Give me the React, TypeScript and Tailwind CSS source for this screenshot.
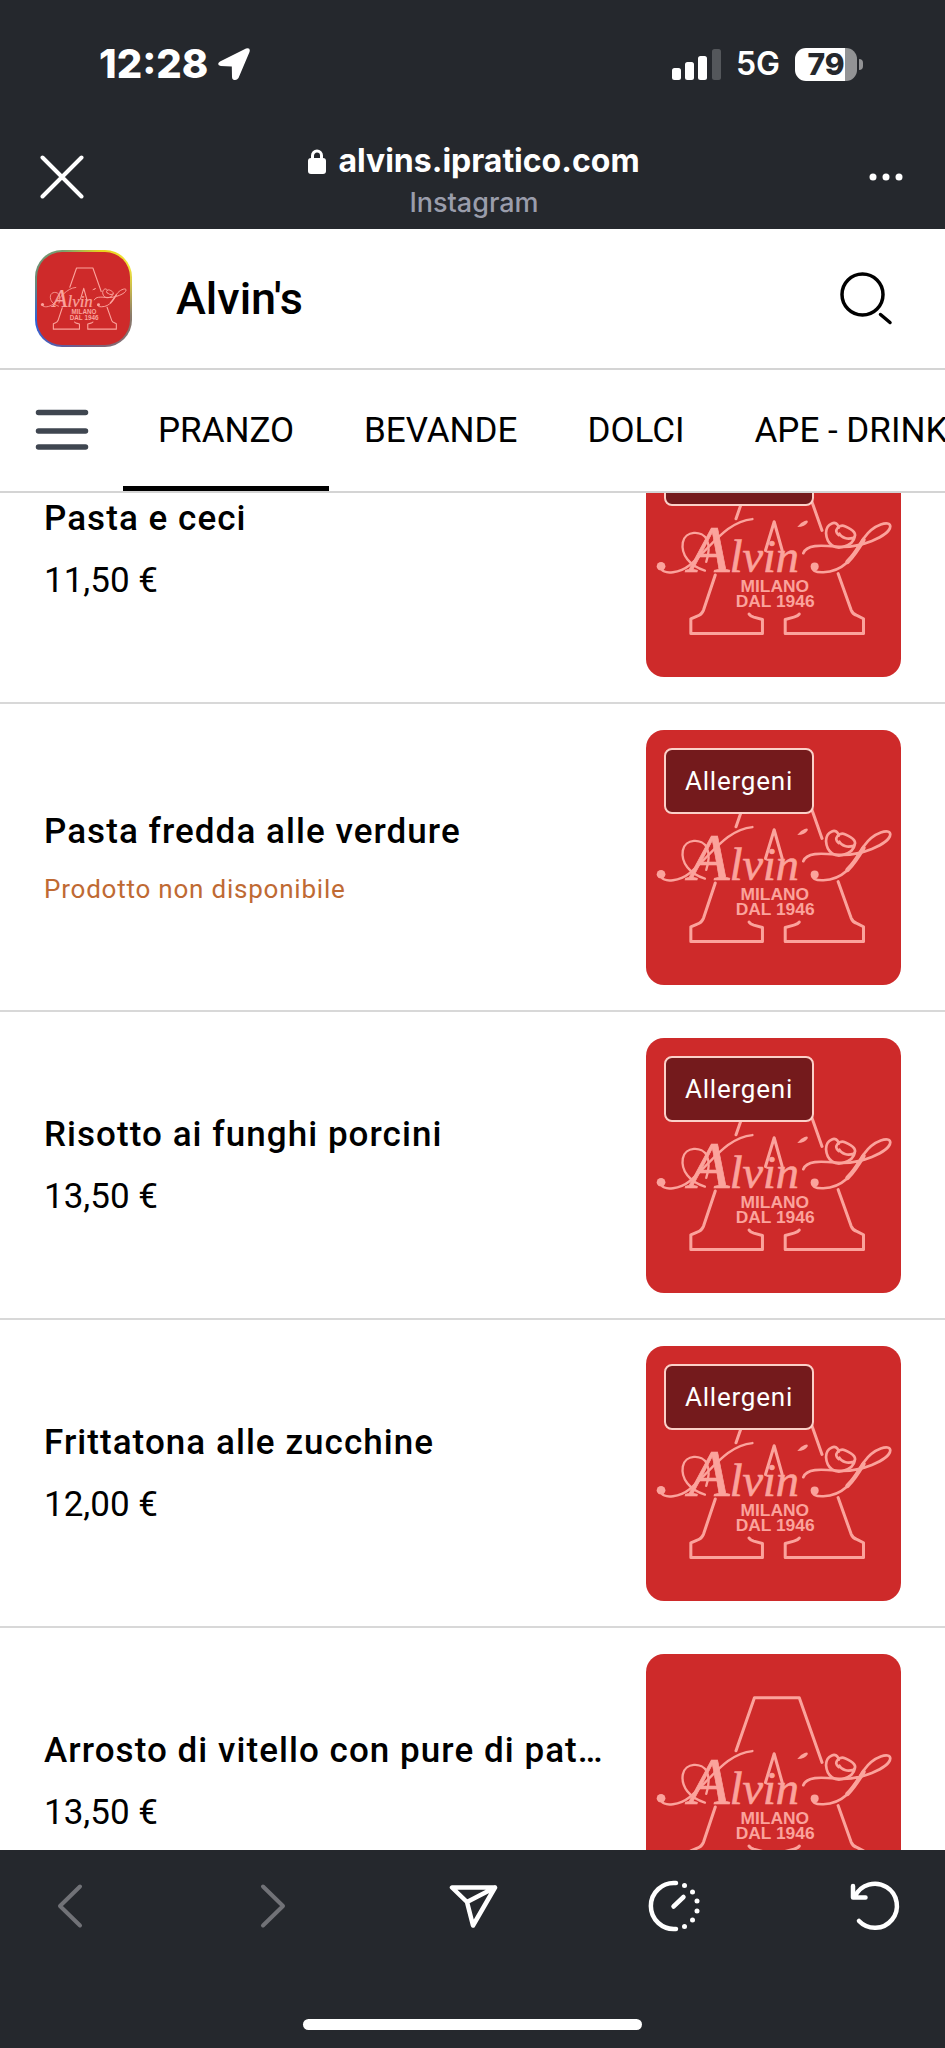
import { useState } from 'react';

interface MenuItem {
  id: number;
  name: string;
  price?: string;
  available: boolean;
  allergens: boolean;
}

const categories = ['PRANZO', 'BEVANDE', 'DOLCI', 'APE - DRINKS'];

const items: MenuItem[] = [
  { id: 1, name: 'Pasta e ceci', price: '11,50 €', available: true, allergens: true },
  { id: 2, name: 'Pasta fredda alle verdure', available: false, allergens: true },
  { id: 3, name: 'Risotto ai funghi porcini', price: '13,50 €', available: true, allergens: true },
  { id: 4, name: 'Frittatona alle zucchine', price: '12,00 €', available: true, allergens: true },
  { id: 5, name: 'Arrosto di vitello con pure di patate', price: '13,50 €', available: true, allergens: false },
];

function Logo({ className }: { className?: string }) {
  return (
    <svg viewBox="0 0 762 762" className={className} role="img" aria-label="Alvin's Milano">
      <rect width="762" height="762" fill="#ce2a2a" />
      <g fill="none" stroke="#fba39c" strokeWidth="9" strokeLinecap="round" strokeLinejoin="round">
        {/* big outlined A behind the name */}
        <path d="M269 289 324 131H458L526 324" />
        <path d="M207 457 172 562Q166 576 153 580L134 588V632H348V590L322 583Q312 580 308 574" />
        <path d="M574 453 613 562Q618 574 630 578L650 588V632H416V590L442 583Q454 580 458 574" />
        <path d="M357 384 383 298 407 384" />
        {/* flourishes */}
        <path
          strokeWidth="7"
          d="M46 440C56 456 100 452 130 428C190 380 240 296 318 290"
        />
        <path
          strokeWidth="7"
          d="M176 444C130 430 104 396 110 360C116 324 168 322 182 352C192 376 186 400 180 418"
        />
        <path
          strokeWidth="8"
          d="M470 392C480 366 520 368 566 372C640 380 728 340 730 312C730 292 680 306 652 346C622 392 602 446 530 449C504 450 496 442 498 432"
        />
        <path strokeWidth="13" d="M650 352C632 382 616 404 602 418" />
        <path
          strokeWidth="8"
          d="M576 338C558 326 576 304 596 312C620 322 632 336 620 346C602 352 584 346 578 334M576 316C572 290 538 302 538 332C540 366 566 382 592 372C612 366 622 354 624 342"
        />
      </g>
      <g fill="#fba39c">
        <circle cx="45" cy="431" r="13" />
        <circle cx="504" cy="432" r="12" />
        <path d="M452 314Q462 300 474 296Q486 292 483 300Q476 312 452 314Z" />
        <text
          x="128"
          y="448"
          stroke="#fba39c"
          strokeWidth="2"
          fontFamily="'Liberation Serif', serif"
          fontStyle="italic"
          fontSize="200"
        >
          A<tspan fontSize="138">lvin</tspan>
        </text>
        <g fontFamily="'Liberation Sans', sans-serif" fontWeight="700" fontSize="52" textAnchor="middle">
          <text x="385" y="509">MILANO</text>
          <text x="386" y="554">DAL 1946</text>
        </g>
      </g>
    </svg>
  );
}

function StatusBar() {
  return (
    <div className="flex h-[128px] items-center justify-between pr-[82px] pl-[99px] text-white">
      <div className="flex items-center gap-[10px]">
        <span className="text-[40px] leading-none font-extrabold">12:28</span>
        <svg viewBox="0 0 32 32" className="size-8" fill="currentColor" aria-hidden="true">
          <path d="M2 13.5 28 .6Q33-.8 31.4 4.2L20.5 30Q18.5 33 15 31.5Q14 30.5 14 29L13.8 18.5 2.8 18Q-2 16.5 2 13.5Z" />
        </svg>
      </div>
      <div className="flex items-center">
        <svg viewBox="0 0 49 31" className="mr-[15px] h-[31px] w-[49px]" fill="currentColor" aria-hidden="true">
          <rect x="0" y="19" width="9" height="12" rx="2.5" />
          <rect x="13" y="13" width="9" height="18" rx="2.5" />
          <rect x="26" y="7" width="9" height="24" rx="2.5" />
          <rect x="40" y="0" width="9" height="31" rx="2.5" opacity="0.22" />
        </svg>
        <span className="mr-[15px] text-[32px] leading-none font-semibold">5G</span>
        <div className="flex items-center gap-[2px]">
          <div className="flex h-[33px] w-[62px] items-center justify-center rounded-[11px] bg-linear-to-r from-white from-80% to-[#929395] to-80% text-[30px] leading-none font-extrabold text-[#25282d]">
            79
          </div>
          <div className="h-[11px] w-1 rounded-r-full bg-[#929395]" />
        </div>
      </div>
    </div>
  );
}

function BrowserBar() {
  return (
    <div className="flex h-[101px] items-start justify-between pt-[10px] pr-8 pl-[35px] text-white">
      <button type="button" aria-label="Close" className="mt-3 flex size-[54px] items-center justify-center">
        <svg viewBox="0 0 44 44" className="size-11" fill="none" stroke="currentColor" strokeWidth="4" strokeLinecap="round">
          <path d="M2.5 2.5 41.5 41.5M41.5 2.5 2.5 41.5" />
        </svg>
      </button>
      <div className="flex flex-col items-center pt-[2px]">
        <div className="flex items-center gap-3">
          <svg viewBox="0 0 18 25" className="h-[25px] w-[18px]" aria-hidden="true">
            <rect x="0" y="9" width="18" height="16" rx="3" fill="currentColor" />
            <path d="M4.5 10V6.5a4.5 4.5 0 0 1 9 0V10" fill="none" stroke="currentColor" strokeWidth="3" />
          </svg>
          <span className="text-[32px] leading-[42px] font-bold">alvins.ipratico.com</span>
        </div>
        <span className="text-[27px] leading-[42px] font-medium text-[#9a9dab]">Instagram</span>
      </div>
      <button type="button" aria-label="More options" className="mt-3 flex size-[54px] items-center justify-center">
        <svg viewBox="0 0 34 8" className="h-2 w-[34px]" fill="currentColor">
          <circle cx="4" cy="4" r="3.5" />
          <circle cx="17" cy="4" r="3.5" />
          <circle cx="30" cy="4" r="3.5" />
        </svg>
      </button>
    </div>
  );
}

function ShopHeader() {
  return (
    <header className="flex h-[141px] items-center justify-between border-b-2 border-[#d4d4d4] pr-[51px] pl-[35px]">
      <div className="flex items-center gap-11">
        <div className="size-[97px] rounded-[27px] bg-[conic-gradient(from_20deg,#e8d21e,#f2e63a_10%,#8a7a6a_25%,#7a5a80_45%,#2f62d8_62%,#6a8a78_75%,#7aa070_88%,#e8d21e)] p-[2px]">
          <Logo className="size-full rounded-[25px]" />
        </div>
        <h1 className="text-[45px] leading-none font-medium">Alvin's</h1>
      </div>
      <button type="button" aria-label="Search" className="text-black">
        <svg viewBox="0 0 54 54" className="size-[54px]" fill="none" stroke="currentColor" strokeWidth="3.5" strokeLinecap="round">
          <circle cx="22.5" cy="22.5" r="20.5" />
          <path d="M40.5 42.5 50 50.5" />
        </svg>
      </button>
    </header>
  );
}

function ItemRow({ item }: { item: MenuItem }) {
  return (
    <li className="flex items-center justify-between gap-[34px] border-b-2 border-[#d8d8d8] pt-[26px] pr-11 pb-[25px] pl-11">
      <div className="flex min-w-0 flex-1 flex-col gap-3">
        <h2 className="truncate text-[35px] leading-[50px] font-medium tracking-[0.03em]">{item.name}</h2>
        {item.available ? (
          <p className="text-[35px] leading-[50px]">{item.price}</p>
        ) : (
          <p className="text-[26px] leading-[40px] tracking-[0.03em] text-[#bf6a33]">Prodotto non disponibile</p>
        )}
      </div>
      <div className="relative size-[255px] shrink-0 overflow-hidden rounded-[18px]">
        <Logo className="size-full" />
        {item.allergens && (
          <button
            type="button"
            className="absolute top-[18px] left-[18px] rounded-lg border-2 border-[#fbd0c8] bg-[#741a1c] px-[19px] py-3 text-[26px] leading-[38px] tracking-[0.03em] text-white"
          >
            Allergeni
          </button>
        )}
      </div>
    </li>
  );
}

function BottomBar() {
  const button = 'flex size-[54px] items-center justify-center';
  return (
    <footer className="flex h-[198px] shrink-0 flex-col items-center justify-between bg-[#25282d] pt-[29px] pb-[18px] text-white">
      <nav className="flex w-full justify-between px-[43px]">
        <button type="button" aria-label="Back" className={button}>
          <svg viewBox="0 0 48 48" className="size-12" fill="none" stroke="#717277" strokeWidth="4" strokeLinecap="round" strokeLinejoin="round">
            <path d="M34 4.5 14 24l20 19.5" />
          </svg>
        </button>
        <button type="button" aria-label="Forward" className={button}>
          <svg viewBox="0 0 48 48" className="size-12" fill="none" stroke="#717277" strokeWidth="4" strokeLinecap="round" strokeLinejoin="round">
            <path d="M16 4.5 36 24 16 43.5" />
          </svg>
        </button>
        <button type="button" aria-label="Share" className={button}>
          <svg viewBox="0 0 50 50" className="size-[50px]" fill="none" stroke="currentColor" strokeWidth="4.5" strokeLinecap="round" strokeLinejoin="round">
            <path d="M4 6.5H47L25 44.5 19 21ZM19 21 47 6.5" />
          </svg>
        </button>
        <button type="button" aria-label="Activity" className={button}>
          <svg viewBox="0 0 54 54" className="size-[54px]" fill="none" stroke="currentColor" strokeWidth="4.5" strokeLinecap="round">
            <path d="M29 4.1A23 23 0 1 0 29 49.9M26.5 27.5 36.5 18" />
            <g fill="currentColor" stroke="none">
              <circle cx="37.5" cy="6.5" r="2.5" />
              <circle cx="45.5" cy="13" r="2.5" />
              <circle cx="50" cy="22" r="2.5" />
              <circle cx="50" cy="32" r="2.5" />
              <circle cx="45.5" cy="41" r="2.5" />
              <circle cx="37.5" cy="47.5" r="2.5" />
            </g>
          </svg>
        </button>
        <button type="button" aria-label="Reload" className={button}>
          <svg viewBox="0 0 54 54" className="size-[54px]" fill="none" stroke="currentColor" strokeWidth="4.5" strokeLinecap="round" strokeLinejoin="round">
            <path d="M7 17.5A22 22 0 1 1 11 42" />
            <path d="M5 7V18.5H17.5" />
          </svg>
        </button>
      </nav>
      <div className="h-[11px] w-[339px] rounded-full bg-white" />
    </footer>
  );
}

export default function App() {
  const [active, setActive] = useState('PRANZO');

  return (
    <div className="flex h-screen flex-col overflow-hidden bg-white font-['Roboto',sans-serif] text-black">
      <div className="shrink-0 bg-[#25282d] font-['Inter',sans-serif]">
        <StatusBar />
        <BrowserBar />
      </div>

      <div className="relative z-10 shrink-0 bg-white">
        <ShopHeader />
        <div className="flex h-[123px] items-stretch overflow-hidden border-b-2 border-[#d4d4d4] pl-[35px]">
          <button type="button" aria-label="Menu" className="mr-[34px] shrink-0">
            <svg viewBox="0 0 54 54" className="size-[54px]" stroke="#3f4650" strokeWidth="5.5" strokeLinecap="round">
              <path d="M3.5 8.5H50.5M3.5 27H50.5M3.5 43H50.5" />
            </svg>
          </button>
          {categories.map((category) => (
            <button
              key={category}
              type="button"
              onClick={() => setActive(category)}
              className={`shrink-0 border-b-[5px] px-[35px] pt-[6px] text-[35px] whitespace-nowrap ${
                active === category ? 'border-black' : 'border-transparent'
              }`}
            >
              {category}
            </button>
          ))}
        </div>
      </div>

      <main className="min-h-0 flex-1 overflow-hidden">
        {/* list sits part-way scrolled under the tabs */}
        <ul className="-mt-[97px]">
          {items.map((item) => (
            <ItemRow key={item.id} item={item} />
          ))}
        </ul>
      </main>

      <BottomBar />
    </div>
  );
}
